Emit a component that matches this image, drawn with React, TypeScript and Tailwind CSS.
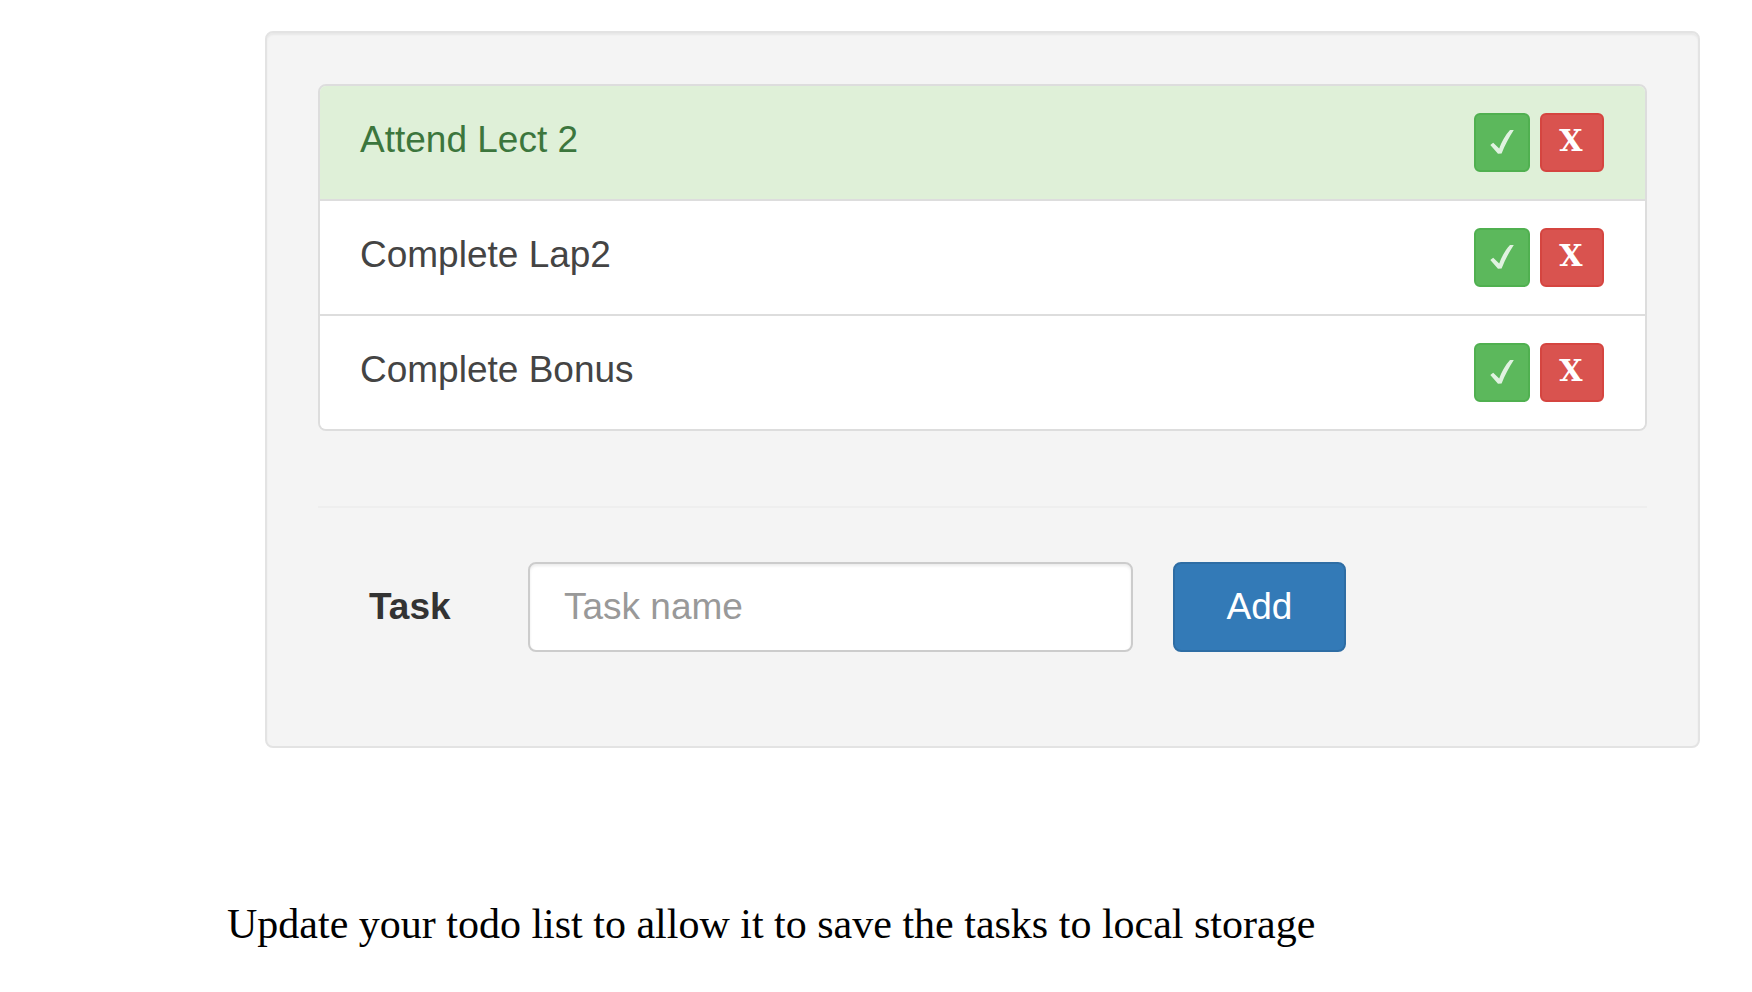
import { useState, type FormEvent } from "react";

type Task = { id: number; name: string; done: boolean };

const initialTasks: Task[] = [
  { id: 1, name: "Attend Lect 2", done: true },
  { id: 2, name: "Complete Lap2", done: false },
  { id: 3, name: "Complete Bonus", done: false },
];

function CheckIcon() {
  return (
    <svg viewBox="0 0 24 26" className="h-[26px] w-6" aria-hidden="true">
      <path
        d="M0.3 16 L3.2 13.8 L9.2 19.4 C11.4 13.2 15 6.4 20 0.9 H23.8 C18.8 8.5 15 16 11.6 24.4 L8 24.8 Z"
        fill="#e0f2e0"
      />
    </svg>
  );
}

type TaskRowProps = {
  task: Task;
  onToggle: () => void;
  onRemove: () => void;
};

function TaskRow({ task, onToggle, onRemove }: TaskRowProps) {
  return (
    <li
      className={`flex items-start justify-between py-[27px] pr-[41px] pl-10 ${
        task.done ? "bg-[#dff0d8] text-[#3c763d]" : "bg-white text-[#444444]"
      }`}
    >
      <span className="text-[37px] leading-[54px]">{task.name}</span>
      <div className="flex gap-[10px]">
        <button
          type="button"
          aria-label={`Complete ${task.name}`}
          onClick={onToggle}
          className="flex h-[59px] w-14 items-center justify-center rounded-md border-2 border-[#50b050] bg-[#5cb85c] pb-[2px]"
        >
          <CheckIcon />
        </button>
        <button
          type="button"
          aria-label={`Remove ${task.name}`}
          onClick={onRemove}
          className="flex h-[59px] w-16 items-center justify-center rounded-md border-2 border-[#d54540] bg-[#d9534f] pr-[2px] pb-1 font-['DejaVu_Serif',serif] text-[30px] leading-[48px] font-bold text-white"
        >
          X
        </button>
      </div>
    </li>
  );
}

export default function App() {
  const [tasks, setTasks] = useState<Task[]>(initialTasks);
  const [name, setName] = useState("");

  const addTask = (event: FormEvent) => {
    event.preventDefault();
    if (!name.trim()) return;
    setTasks([...tasks, { id: Date.now(), name: name.trim(), done: false }]);
    setName("");
  };

  return (
    <main className="bg-white pt-[31px] pr-[52px] pb-8 pl-[227px] font-['Liberation_Sans',Arial,sans-serif]">
      <section className="ml-[38px] rounded-lg border-2 border-[#e3e3e3] bg-[#f4f4f4] px-[51px] pt-[51px] pb-[94px] shadow-[inset_0_2px_2px_rgba(0,0,0,0.05)]">
        <ul className="divide-y-2 divide-[#dddddd] overflow-hidden rounded-lg border-2 border-[#dddddd]">
          {tasks.map((task) => (
            <TaskRow
              key={task.id}
              task={task}
              onToggle={() =>
                setTasks(tasks.map((t) => (t.id === task.id ? { ...t, done: !t.done } : t)))
              }
              onRemove={() => setTasks(tasks.filter((t) => t.id !== task.id))}
            />
          ))}
        </ul>
        <hr className="mt-[75px] mb-[54px] border-t-2 border-[#eeeeee]" />
        <form onSubmit={addTask} className="flex items-center pl-[51px] text-[37px] leading-[54px]">
          <label htmlFor="task-name" className="w-[159px] font-bold text-[#333333]">
            Task
          </label>
          <input
            id="task-name"
            value={name}
            onChange={(event) => setName(event.target.value)}
            placeholder="Task name"
            className="h-[90px] w-[605px] min-w-0 rounded-lg border-2 border-[#cccccc] bg-white px-[34px] text-[#555555] shadow-[inset_0_2px_3px_rgba(0,0,0,0.08)] placeholder:text-[#999999]"
          />
          <button
            type="submit"
            className="ml-10 h-[90px] w-[173px] rounded-lg border-2 border-[#2e6da4] bg-[#337ab7] text-white"
          >
            Add
          </button>
        </form>
      </section>
      <p className="mt-[150px] font-['Liberation_Serif','Times_New_Roman',serif] text-[42px] leading-[52px] text-black">
        Update your todo list to allow it to save the tasks to local storage
      </p>
    </main>
  );
}
